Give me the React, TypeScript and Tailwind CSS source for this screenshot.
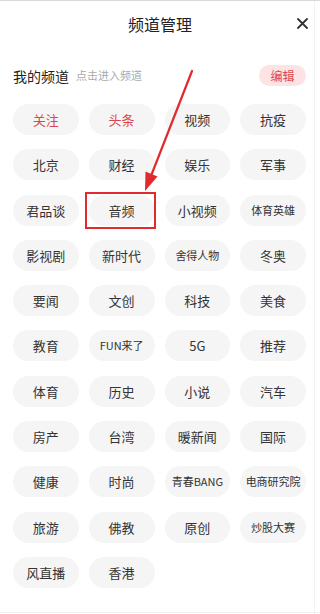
import React from "react";

const channels: { name: string; red?: boolean; small?: boolean }[] = [
  { name: "关注", red: true },
  { name: "头条", red: true },
  { name: "视频" },
  { name: "抗疫" },
  { name: "北京" },
  { name: "财经" },
  { name: "娱乐" },
  { name: "军事" },
  { name: "君品谈" },
  { name: "音频" },
  { name: "小视频" },
  { name: "体育英雄", small: true },
  { name: "影视剧" },
  { name: "新时代" },
  { name: "舍得人物", small: true },
  { name: "冬奥" },
  { name: "要闻" },
  { name: "文创" },
  { name: "科技" },
  { name: "美食" },
  { name: "教育" },
  { name: "FUN来了", small: true },
  { name: "5G" },
  { name: "推荐" },
  { name: "体育" },
  { name: "历史" },
  { name: "小说" },
  { name: "汽车" },
  { name: "房产" },
  { name: "台湾" },
  { name: "暖新闻" },
  { name: "国际" },
  { name: "健康" },
  { name: "时尚" },
  { name: "青春BANG", small: true },
  { name: "电商研究院", small: true },
  { name: "旅游" },
  { name: "佛教" },
  { name: "原创" },
  { name: "炒股大赛", small: true },
  { name: "风直播" },
  { name: "香港" },
];

export default function App() {
  return (
    <div
      className="relative w-[320px] h-[614px] overflow-hidden bg-white border-t border-[#d9d9d9]"
      style={{ fontFamily: '"Noto Sans CJK SC", "Noto Sans", sans-serif' }}
    >
      <div className="absolute right-[5px] top-0 bottom-0 w-px bg-[#f2f2f2]" />
      <div className="absolute left-0 right-0 bottom-[1px] h-px bg-[#f0f0f0]" />

      {/* header */}
      <div className="relative h-[45px] flex items-center justify-center">
        <span className="text-[16px] leading-none text-[#222]">频道管理</span>
        <svg
          className="absolute right-[12px] top-[17px]"
          width="11"
          height="11"
          viewBox="0 0 11 11"
        >
          <path
            d="M1 1L10 10M10 1L1 10"
            stroke="#333"
            strokeWidth="1.8"
            strokeLinecap="round"
          />
        </svg>
      </div>

      {/* my channels */}
      <div className="mt-[19px] h-[21px] flex items-center pl-[13px] pr-[14px]">
        <span className="text-[14px] leading-none text-[#222]">我的频道</span>
        <span className="ml-[7px] text-[11px] leading-none text-[#aaa]">
          点击进入频道
        </span>
        <button className="ml-auto w-[47px] h-[21px] rounded-full bg-[#fde3e4] text-[12px] leading-none text-[#e0474c]">
          编辑
        </button>
      </div>

      <div className="mt-[18px] grid grid-cols-4 gap-x-[10px] gap-y-[14.3px] pl-[13px] pr-[14px]">
        {channels.map((c) => (
          <div
            key={c.name}
            className={`h-[31px] rounded-full bg-[#f5f5f5] flex items-center justify-center leading-none whitespace-nowrap ${
              c.small ? "text-[11px]" : "text-[13px]"
            } ${c.red ? "text-[#d9484c]" : "text-[#333]"}`}
          >
            {c.name}
          </div>
        ))}
      </div>

      {/* annotation: highlight box */}
      <div className="absolute left-[85px] top-[191px] w-[71px] h-[37px] border-2 border-[#e02a2e]" />

      {/* annotation: arrow */}
      <svg
        className="absolute left-0 top-0 pointer-events-none"
        width="320"
        height="614"
        viewBox="0 0 320 614"
      >
        <path
          d="M192 70L151 175"
          stroke="#e02a2e"
          strokeWidth="2.2"
          strokeLinecap="round"
        />
        <path d="M145 190L157.5 175.5L145.5 170.5Z" fill="#e02a2e" />
      </svg>
    </div>
  );
}
